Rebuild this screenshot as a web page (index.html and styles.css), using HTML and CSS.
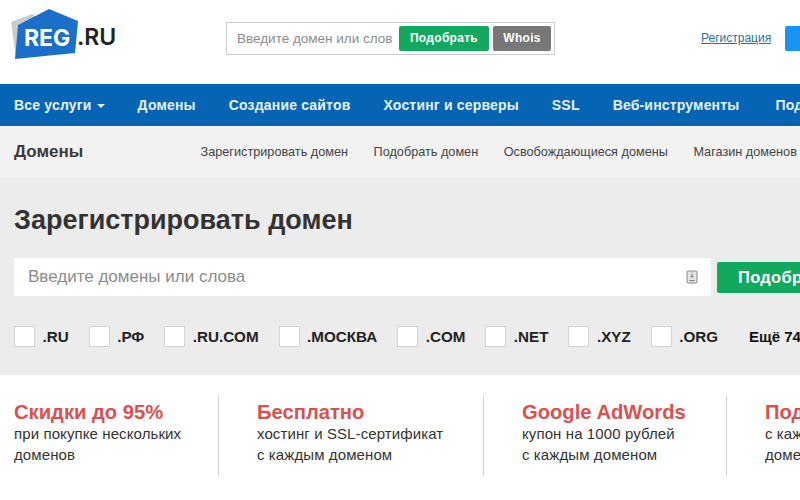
FILE: index.html
```html
<!DOCTYPE html>
<html lang="ru">
<head>
<meta charset="utf-8">
<title>REG.RU</title>
<link rel="stylesheet" href="styles.css">
</head>
<body>
<div class="page">
  <header class="top">
    <a class="logo">
      <svg class="logo-mark" width="68" height="52" viewBox="0 0 68 52">
        <path d="M0 13 L21 5 L26 8 L5 48 Z" fill="#c9cbcd"/>
        <path d="M7 16 L38 0 L67 12 L64 44 L4 50 Z" fill="#1b6fc8"/>
      </svg>
      <span class="logo-reg">REG</span><span class="logo-ru">.RU</span>
    </a>
    <form class="search">
      <span class="search-ph">Введите домен или слов</span>
      <span class="btn btn-green">Подобрать</span>
      <span class="btn btn-gray">Whois</span>
    </form>
    <a class="reg-link">Регистрация</a>
    <span class="login"></span>
  </header>
  <nav class="nav">
    <a class="nav-item">Все услуги <i class="caret"></i></a>
    <a class="nav-item">Домены</a>
    <a class="nav-item">Создание сайтов</a>
    <a class="nav-item">Хостинг и серверы</a>
    <a class="nav-item">SSL</a>
    <a class="nav-item">Веб-инструменты</a>
    <a class="nav-item">Поддержка</a>
  </nav>
  <div class="subnav">
    <strong class="subnav-title">Домены</strong>
    <a>Зарегистрировать домен</a>
    <a>Подобрать домен</a>
    <a>Освобождающиеся домены</a>
    <a>Магазин доменов</a>
  </div>
  <main class="main">
    <h1 class="title">Зарегистрировать домен</h1>
    <div class="domain-row">
      <div class="domain-input">
        <span>Введите домены или слова</span>
        <svg class="upload" width="12" height="14" viewBox="0 0 12 14">
          <rect x="1" y="1" width="10" height="12" rx="1" fill="#e4e4e4" stroke="#8a8a8a"/>
          <path d="M6 3.500V7M4.500 6L6 7.500 7.500 6M3.500 10.500H8.500" fill="none" stroke="#777"/>
        </svg>
      </div>
      <span class="domain-btn">Подобрать</span>
    </div>
    <div class="zones">
      <label class="zone"><i class="box"></i>.RU</label>
      <label class="zone"><i class="box"></i>.РФ</label>
      <label class="zone"><i class="box"></i>.RU.COM</label>
      <label class="zone"><i class="box"></i>.МОСКВА</label>
      <label class="zone"><i class="box"></i>.COM</label>
      <label class="zone"><i class="box"></i>.NET</label>
      <label class="zone"><i class="box"></i>.XYZ</label>
      <label class="zone"><i class="box"></i>.ORG</label>
      <span class="zone zone-more">Ещё 74</span>
    </div>
  </main>
  <section class="promos">
    <div class="promo promo-a"><h3>Скидки до 95%</h3><p>при покупке нескольких<br>доменов</p></div>
    <div class="promo promo-b"><h3>Бесплатно</h3><p>хостинг и SSL-сертификат<br>с каждым доменом</p></div>
    <div class="promo promo-c"><h3>Google AdWords</h3><p>купон на 1000 рублей<br>с каждым доменом</p></div>
    <div class="promo promo-d"><h3>Подарок</h3><p>с каждым<br>доменом</p></div>
  </section>
</div>
</body>
</html>
```
FILE: styles.css
```css
html, body { margin: 0; padding: 0; overflow: hidden; background: #fff; }
.page { width: 800px; height: 500px; overflow: hidden; font-family: "Liberation Sans", Arial, sans-serif; color: #333; }
a { color: inherit; text-decoration: none; }

.top { height: 84px; display: flex; align-items: flex-start; white-space: nowrap; box-sizing: border-box; }
.logo { position: relative; width: 226px; height: 84px; flex: none; display: block; }
.logo-mark { position: absolute; left: 11px; top: 9px; }
.logo-reg { position: absolute; left: 24px; top: 24px; font: 700 23px/28px Inter, sans-serif; color: #fff; }
.logo-ru { position: absolute; left: 77px; top: 23px; font: 600 23px/28px Inter, sans-serif; color: #222; }

.search { margin-top: 22px; width: 329px; height: 33px; box-sizing: border-box; border: 1px solid #ccc; display: flex; align-items: center; padding: 0 3px 0 10px; flex: none; }
.search-ph { font-size: 13.500px; color: #8c8c8c; width: 162px; flex: none; }
.btn { height: 25px; line-height: 25px; border-radius: 2px; color: #fff; font-size: 12px; font-weight: 700; text-align: center; letter-spacing: 0.3px; }
.btn-green { width: 90px; background: #12a95f; margin-right: 4px; }
.btn-gray { width: 58px; background: #777; }

.reg-link { margin: 31px 0 0 146px; font-size: 12px; color: #2a6fa8; text-decoration: underline; flex: none; }
.login { margin: 26px 0 0 14px; width: 30px; height: 25px; border-radius: 2px; background: #1a94f0; flex: none; }

.nav { height: 42px; background: #0664b5; display: flex; align-items: center; padding-left: 14px; gap: 33px; white-space: nowrap; }
.nav-item { font-size: 14px; font-weight: 700; color: #e8f2fa; letter-spacing: 0.18px; }
.nav-item:last-child { margin-left: 3px; }
.caret { display: inline-block; vertical-align: middle; border: 4px solid transparent; border-top-color: #e8f2fa; border-bottom: 0; margin-left: 1px; }

.subnav { height: 52px; background: #f2f2f2; display: flex; align-items: center; padding-left: 14px; white-space: nowrap; font-size: 12.700px; color: #444; gap: 25.500px; }
.subnav-title { font-size: 17px; color: #3a3a3a; width: 161px; flex: none; }

.main { height: 197px; background: #ececec; box-sizing: border-box; padding: 27px 0 0 14px; white-space: nowrap; }
.title { margin: 0; font-size: 27px; line-height: 30px; font-weight: 700; color: #333; }
.domain-row { display: flex; align-items: center; margin-top: 23px; gap: 6px; }
.domain-input { width: 697px; height: 38px; flex: none; background: #fff; box-sizing: border-box; padding: 0 13px 0 14px; display: flex; align-items: center; justify-content: space-between; font-size: 17px; color: #8c8c8c; }
.domain-btn { width: 120px; height: 31px; padding: 0 0 0 21px; box-sizing: border-box; line-height: 31px; flex: none; background: #12a95f; color: #fff; border-radius: 2px; font-size: 16.500px; font-weight: 700; letter-spacing: 0.3px; }
.zones { display: flex; align-items: center; margin-top: 30px; }
.zone { display: flex; align-items: center; font-size: 15.200px; font-weight: 700; color: #222; margin-right: 20px; }
.box { width: 19px; height: 19px; background: #fff; border: 1px solid #d4d4d4; margin-right: 7.500px; flex: none; }
.zone-more { margin-left: 11px; font-size: 15px; color: #111; }

.promos { display: flex; padding-top: 20px; white-space: nowrap; }
.promo { height: 81px; box-sizing: border-box; flex: none; padding-top: 5px; }
.promo + .promo { border-left: 1px solid #d4d4d4; padding-left: 38px; }
.promo-a { width: 218px; padding-left: 14px; }
.promo-b { width: 265px; }
.promo-c { width: 243px; }
.promo h3 { margin: 0; font-size: 20.200px; line-height: 24px; font-weight: 700; color: #de4f50; }
.promo p { margin: 0; font-size: 15px; line-height: 20.500px; color: #333; letter-spacing: 0.1px; }
```
